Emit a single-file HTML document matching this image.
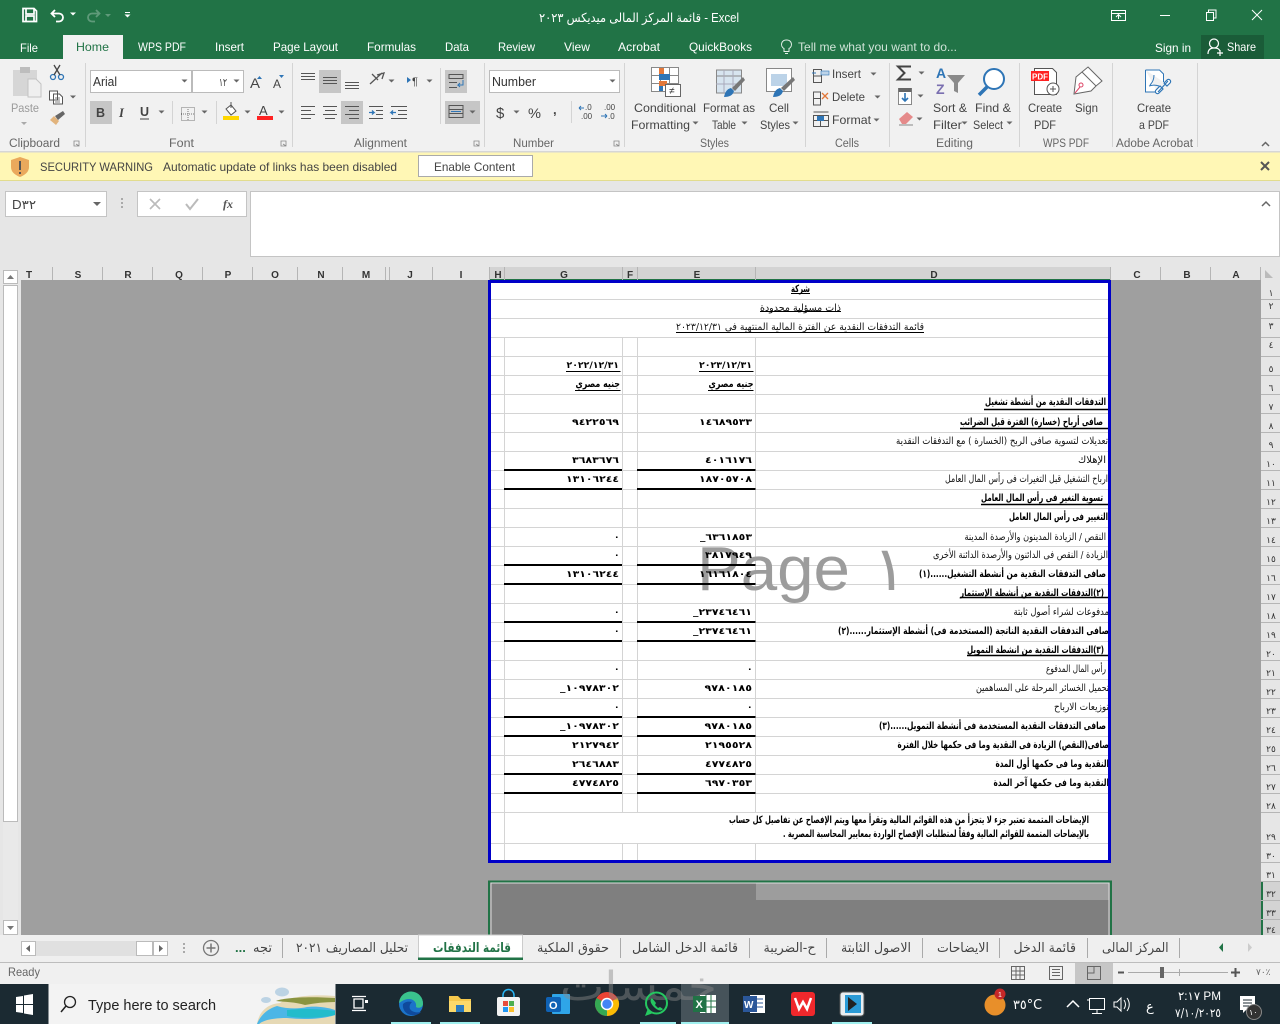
<!DOCTYPE html>
<html lang="en"><head><meta charset="utf-8"><title>Excel</title>
<style>
html,body{margin:0;padding:0;background:#e6e6e6;width:1280px;height:1024px;overflow:hidden}
svg{display:block;position:absolute;left:0;top:0}
text{font-family:"Liberation Sans","DejaVu Sans",sans-serif;white-space:pre}
.u{font-size:12px;fill:#444}
.w{font-size:12px;fill:#fff}
.g{font-size:11.500px;fill:#666}
.h{font-size:10px;fill:#333;text-anchor:middle;font-weight:bold}
.c{font-family:"DejaVu Sans",sans-serif;font-size:10px;fill:#111;direction:rtl;text-anchor:start}
.b{font-weight:bold;fill:#000}
.n{font-family:"DejaVu Sans",sans-serif;font-size:9px;font-weight:bold;fill:#000;direction:ltr}
.rn{font-family:"DejaVu Sans",sans-serif;font-size:9px;fill:#333;text-anchor:middle}
.tab{font-family:"DejaVu Sans",sans-serif;font-size:13px;fill:#444;direction:rtl;text-anchor:start}
.ln{stroke:#555;stroke-width:1;fill:none}
</style></head><body>
<svg width="1280" height="1024" viewBox="0 0 1280 1024">
<defs><path id="a" d="M-3-1.500h6l-3 3z" fill="#666"/><path id="aw" d="M-3-1.500h6l-3 3z" fill="#fff"/></defs>

<!-- window chrome -->
<rect width="1280" height="59" fill="#217346"/>
<rect y="59" width="1280" height="93" fill="#f1f1f1"/>
<rect x="63" y="35" width="60" height="24" fill="#f1f1f1"/>
<rect x="1201" y="35" width="63" height="24" fill="#1a5c38"/>

<!-- quick access -->
<path d="M23 8.500h11l2.500 2.500v10.500h-13.500z M26 9v5h8V9 M26 21v-5h8v5" fill="none" stroke="#fff" stroke-width="1.700"/>
<path d="M55 10l-3.500 3.500 3.500 3.500 M52 13.500h7a4 4 0 0 1 0 8h-3" fill="none" stroke="#fff" stroke-width="1.800"/>
<use href="#aw" x="73" y="14"/>
<path d="M96 10l3.500 3.500-3.500 3.500 M99 13.500h-7a4 4 0 0 0 0 8h3" fill="none" stroke="#5f9a7a" stroke-width="1.800"/>
<path d="M105 14h6l-3 3z" fill="#5f9a7a"/>
<path d="M125 12.500h5" stroke="#fff"/><use href="#aw" x="127.500" y="16"/>
<text x="539" y="22" font-size="12.500" fill="#fff" textLength="200" lengthAdjust="spacingAndGlyphs">قائمة المركز المالى ميديكس ٢٠٢٣ - Excel</text>
<path d="M1111.500 10.500h14v10h-14z M1111.500 13.500h14 M1118.500 19v-4 M1116 17l2.500-2.500 2.500 2.500" fill="none" stroke="#fff"/>
<path d="M1160 15.500h10" stroke="#fff"/>
<path d="M1206.500 12.500h7v8h-7z M1208.500 12v-2h7.500v8h-2" fill="none" stroke="#fff"/>
<path d="M1252 10l10 10 M1262 10l-10 10" stroke="#fff"/>

<!-- tabs -->
<text class="w" x="20" y="52" textLength="18" lengthAdjust="spacingAndGlyphs">File</text>
<text x="76" y="51" font-size="12" fill="#217346" textLength="33" lengthAdjust="spacingAndGlyphs">Home</text>
<text class="w" x="138" y="51" textLength="48" lengthAdjust="spacingAndGlyphs">WPS PDF</text>
<text class="w" x="215" y="51" textLength="29" lengthAdjust="spacingAndGlyphs">Insert</text>
<text class="w" x="273" y="51" textLength="65" lengthAdjust="spacingAndGlyphs">Page Layout</text>
<text class="w" x="367" y="51" textLength="49" lengthAdjust="spacingAndGlyphs">Formulas</text>
<text class="w" x="445" y="51" textLength="24" lengthAdjust="spacingAndGlyphs">Data</text>
<text class="w" x="498" y="51" textLength="37" lengthAdjust="spacingAndGlyphs">Review</text>
<text class="w" x="564" y="51" textLength="26" lengthAdjust="spacingAndGlyphs">View</text>
<text class="w" x="618" y="51" textLength="42" lengthAdjust="spacingAndGlyphs">Acrobat</text>
<text class="w" x="689" y="51" textLength="63" lengthAdjust="spacingAndGlyphs">QuickBooks</text>
<path d="M786.500 40a4.500 4.500 0 0 1 2.500 8.500v3h-5v-3a4.500 4.500 0 0 1 2.500-8.500z M785 53.500h3" fill="none" stroke="#e4eee8"/>
<text x="798" y="51" font-size="12" fill="#cfe3d7" textLength="159" lengthAdjust="spacingAndGlyphs">Tell me what you want to do...</text>
<text class="w" x="1155" y="52" textLength="36" lengthAdjust="spacingAndGlyphs">Sign in</text>
<path d="M1208 54c0-4 2-6 6-6s5 1 6 3 M1214 39a4.500 4.500 0 1 1 0 9a4.500 4.500 0 0 1 0-9z M1217 53h6 M1220 50v6" fill="none" stroke="#fff" stroke-width="1.200"/>
<text class="w" x="1227" y="51" textLength="29" lengthAdjust="spacingAndGlyphs">Share</text>

<!-- ribbon group separators -->
<path d="M85.500 63v84 M292.500 63v84 M484.500 63v84 M624.500 63v84 M805.500 63v84 M889.500 63v84 M1019.500 63v84 M1112.500 63v84 M1197.500 63v84" stroke="#d4d4d4"/>
<path d="M172.500 101v23 M216.500 101v23 M440.500 68v56 M571.500 101v22" stroke="#d4d4d4"/>
<rect y="151" width="1280" height="1.500" fill="#d6d6d6"/>
<text class="g" x="9" y="147" textLength="51" lengthAdjust="spacingAndGlyphs">Clipboard</text>
<text class="g" x="169" y="147" textLength="25" lengthAdjust="spacingAndGlyphs">Font</text>
<text class="g" x="354" y="147" textLength="53" lengthAdjust="spacingAndGlyphs">Alignment</text>
<text class="g" x="513" y="147" textLength="41" lengthAdjust="spacingAndGlyphs">Number</text>
<text class="g" x="700" y="147" textLength="29" lengthAdjust="spacingAndGlyphs">Styles</text>
<text class="g" x="835" y="147" textLength="24" lengthAdjust="spacingAndGlyphs">Cells</text>
<text class="g" x="936" y="147" textLength="37" lengthAdjust="spacingAndGlyphs">Editing</text>
<text class="g" x="1043" y="147" textLength="46" lengthAdjust="spacingAndGlyphs">WPS PDF</text>
<text class="g" x="1116" y="147" textLength="77" lengthAdjust="spacingAndGlyphs">Adobe Acrobat</text>
<path d="M74 141h5v5h-5z M76 144l3 2 M281 141h5v5h-5z M283 144l3 2 M474 141h5v5h-5z M476 144l3 2 M614 141h5v5h-5z M616 144l3 2" fill="none" stroke="#888" stroke-width=".8"/>
<path d="M1262 146l3.500-3.500 3.500 3.500" fill="none" stroke="#666" stroke-width="1.500"/>

<!-- clipboard -->
<rect x="13" y="70" width="24" height="26" fill="#d6d6d6"/><rect x="20" y="67" width="10" height="6" fill="#bdbdbd"/>
<path d="M28 79h8l5 5v13H28z" fill="#efefef" stroke="#c3c3c3"/>
<text x="11" y="112" font-size="12" fill="#9a9a9a" textLength="28" lengthAdjust="spacingAndGlyphs">Paste</text>
<path d="M21 122h6l-3 3z" fill="#aaa"/>
<circle cx="53" cy="77" r="2.500" fill="none" stroke="#2e75b6" stroke-width="1.300"/><circle cx="61" cy="77" r="2.500" fill="none" stroke="#2e75b6" stroke-width="1.300"/>
<path d="M54 75l6-10 M60 75l-6-10" stroke="#444" stroke-width="1.300"/>
<path d="M49.500 91h8v9h-8z M53.500 94h6l3 3v7h-9z" fill="#fff" stroke="#555"/><path d="M55 98h5 M55 100h5 M55 102h5" stroke="#555" stroke-width=".7"/>
<use href="#a" x="73" y="97"/>
<path d="M50 120l6 5 3-4-5-5z" fill="#e2b47d"/><path d="M55 116l8-5 2 3-7 6z" fill="#666"/>

<!-- font -->
<rect x="90.500" y="70.500" width="101" height="22" fill="#fff" stroke="#bbb"/><rect x="192.500" y="70.500" width="51" height="22" fill="#fff" stroke="#bbb"/>
<text x="93" y="86" font-size="12.500" fill="#333" textLength="24" lengthAdjust="spacingAndGlyphs">Arial</text>
<text x="219" y="86" font-size="11" fill="#333" style="font-family:'DejaVu Sans',sans-serif" textLength="8" lengthAdjust="spacingAndGlyphs">١٢</text>
<use href="#a" x="184.500" y="81"/><use href="#a" x="236.500" y="81"/>
<text x="250" y="88" font-size="14" fill="#444" textLength="10" lengthAdjust="spacingAndGlyphs">A</text><path d="M257 79l2.500-3 2.500 3z" fill="#2e75b6"/>
<text x="273" y="88" font-size="12" fill="#444" textLength="8" lengthAdjust="spacingAndGlyphs">A</text><path d="M279 75h5l-2.500 3z" fill="#2e75b6"/>
<rect x="90" y="101" width="22" height="23" fill="#c6c6c6"/>
<text x="96" y="117" font-size="12.500" font-weight="bold" fill="#444">B</text>
<text x="119" y="117" font-size="12.500" font-style="italic" fill="#444" style="font-family:'Liberation Serif',serif;font-weight:bold">I</text>
<text x="140" y="116" font-size="12.500" font-weight="bold" fill="#444">U</text><path d="M140 119h9" stroke="#444"/>
<use href="#a" x="161.500" y="112"/>
<path d="M181.500 107.500h13v13h-13z M188 107v14 M181 114h14" fill="none" stroke="#777" stroke-dasharray="1 1"/>
<use href="#a" x="204.500" y="112"/>
<path d="M226 109l5-4 5 6-5 4z" fill="#fff" stroke="#555"/><path d="M231 102v6" stroke="#555"/>
<rect x="223" y="116" width="16" height="4" fill="#ffd700"/><use href="#a" x="247.500" y="112"/>
<text x="259" y="115" font-size="13" fill="#444">A</text><rect x="257" y="116" width="16" height="4" fill="#f22"/><use href="#a" x="281.500" y="112"/>

<!-- alignment -->
<rect x="319" y="70" width="22" height="23" fill="#c6c6c6"/><rect x="341" y="101" width="22" height="23" fill="#c6c6c6"/>
<rect x="445" y="70" width="22" height="23" fill="#c6c6c6"/><rect x="445" y="101" width="35" height="23" fill="#c6c6c6"/>
<path class="ln" d="M301 73.500h14 M301 76.500h14 M301 79.500h14 M323 77.500h14 M323 80.500h14 M323 83.500h14 M345 82.500h14 M345 85.500h14 M345 88.500h14"/>
<path class="ln" d="M301 106.500h14 M301 110.500h10 M301 114.500h14 M301 118.500h10 M323 106.500h14 M325 110.500h10 M323 114.500h14 M325 118.500h10 M345 106.500h14 M349 110.500h10 M345 114.500h14 M349 118.500h10"/>
<path d="M370 84l12-11 M377 75l7-2-2 6 M372 74l6 6" fill="none" stroke="#555" stroke-width="1.300"/><use href="#a" x="391.500" y="81"/>
<path d="M407 77l4 3-4 3z" fill="#2e75b6"/><text x="412" y="85" font-size="11" fill="#444">¶</text><use href="#a" x="429.500" y="81"/>
<path class="ln" d="M369 106.500h14 M376 110.500h7 M376 114.500h7 M369 118.500h14 M391 106.500h16 M398 110.500h9 M398 114.500h9 M391 118.500h16"/>
<path d="M369 112.500h5l-2-2m2 2l-2 2 M396 112.500h-5l2-2m-2 2l2 2" fill="none" stroke="#2e75b6" stroke-width="1.300"/>
<path class="ln" d="M449 74.500h14v4h-14z M449 82.500h8 M449 87.500h8"/><path d="M463 80v5h-5l2-2m-2 2l2 2" fill="none" stroke="#2e75b6"/>
<path class="ln" d="M449 105.500h14v12h-14z M449 109.500h14 M449 113.500h14"/><path d="M451 111.500h10" stroke="#2e75b6"/><use href="#a" x="472.500" y="112"/>

<!-- number -->
<rect x="489.500" y="70.500" width="130" height="22" fill="#fff" stroke="#bbb"/>
<text x="492" y="86" font-size="12.500" fill="#333" textLength="44" lengthAdjust="spacingAndGlyphs">Number</text><use href="#a" x="612.500" y="81"/>
<text x="496" y="118" font-size="15" fill="#444">$</text><use href="#a" x="516.500" y="112"/>
<text x="528" y="118" font-size="14" fill="#444" textLength="13" lengthAdjust="spacingAndGlyphs">%</text>
<text x="553" y="114" font-size="13" font-weight="bold" fill="#444">,</text>
<text x="585" y="110" font-size="8" fill="#444">.0</text><text x="581" y="119" font-size="8" fill="#444">.00</text><path d="M579 108h5m-5 0l2-2m-2 2l2 2" stroke="#2e75b6" fill="none"/>
<text x="604" y="110" font-size="8" fill="#444">.00</text><text x="608" y="119" font-size="8" fill="#444">.0</text><path d="M601 116h6m0 0l-2-2m2 2l-2 2" stroke="#2e75b6" fill="none"/>

<!-- styles -->
<path d="M651.500 67.500h27v24h-27z M660.500 67.500v24 M669.500 67.500v24 M651.500 75.500h27 M651.500 83.500h27" fill="#fff" stroke="#888"/>
<rect x="659" y="68" width="5" height="6" fill="#e2783a"/><rect x="659" y="74" width="11" height="6" fill="#2e75b6"/><rect x="659" y="81" width="8" height="5" fill="#e2783a"/><rect x="659" y="86" width="4" height="5" fill="#2e75b6"/>
<rect x="665.500" y="84.500" width="15" height="12" fill="#fff" stroke="#666"/><text x="669" y="94" font-size="10" fill="#333">≠</text>
<text class="u" x="634" y="112" textLength="62" lengthAdjust="spacingAndGlyphs">Conditional</text>
<text class="u" x="631" y="129" textLength="59" lengthAdjust="spacingAndGlyphs">Formatting</text><use href="#a" x="695.500" y="123"/>
<path d="M716.500 70h25v23h-25z M716.500 76h25" fill="#d7e4ef" stroke="#888"/><path d="M724 70v23 M733 70v23 M716 84h25" stroke="#aab"/>
<path d="M724 97c1-5 3-8 7-9l3 3c-1 4-4 6-10 6z" fill="#2e75b6"/><path d="M732 88l11-11 2 3-10 11z" fill="#777"/>
<text class="u" x="703" y="112" textLength="52" lengthAdjust="spacingAndGlyphs">Format as</text>
<text class="u" x="712" y="129" textLength="24" lengthAdjust="spacingAndGlyphs">Table</text><use href="#a" x="744.500" y="123"/>
<path d="M766.500 68.500h25v23h-25z" fill="#fff" stroke="#888"/><rect x="771" y="74" width="16" height="12" fill="#bcd3e8"/>
<path d="M773 97c1-5 3-8 7-9l3 3c-1 4-4 6-10 6z" fill="#2e75b6"/><path d="M781 88l12-11 2 3-11 11z" fill="#777"/>
<text class="u" x="769" y="112" textLength="20" lengthAdjust="spacingAndGlyphs">Cell</text>
<text class="u" x="760" y="129" textLength="30" lengthAdjust="spacingAndGlyphs">Styles</text><use href="#a" x="795.500" y="123"/>

<!-- cells -->
<path class="ln" d="M813.500 69.500h8v13h-8z M813.500 76h8"/><rect x="821" y="71" width="8" height="4" fill="#bcd3e8" stroke="#2e75b6" stroke-width=".6"/>
<path d="M816 73h-4" stroke="#2e75b6"/>
<text class="u" x="832" y="78" textLength="29" lengthAdjust="spacingAndGlyphs">Insert</text><use href="#a" x="873.500" y="74"/>
<path class="ln" d="M813.500 92h7v13h-7z M813.500 98.500h7"/><path d="M822 93l6 6 M828 93l-6 6" stroke="#e2783a" stroke-width="1.300"/>
<text class="u" x="832" y="101" textLength="33" lengthAdjust="spacingAndGlyphs">Delete</text><use href="#a" x="877.500" y="97"/>
<path class="ln" d="M813.500 115.500h15v11h-15z M813.500 120.500h15 M820.500 115v12 M813.500 112h15"/><rect x="817" y="116" width="7" height="5" fill="#2e75b6"/>
<text class="u" x="832" y="124" textLength="39" lengthAdjust="spacingAndGlyphs">Format</text><use href="#a" x="876.500" y="120"/>

<!-- editing -->
<path d="M911 66.500h-13l6.500 6.500-6.500 6.500h13" fill="none" stroke="#444" stroke-width="2"/><use href="#a" x="921.500" y="73"/>
<rect x="898.500" y="88.500" width="13" height="16" fill="#fff" stroke="#888"/><rect x="898.500" y="88" width="13" height="4" fill="#666"/><path d="M905 93v8m-3-3l3 3 3-3" stroke="#2e75b6" fill="none" stroke-width="1.600"/><use href="#a" x="920.500" y="96"/>
<path d="M899 119l8-7 6 5-7 7h-4z" fill="#e58a8a"/><path d="M899 125h14" stroke="#888"/><use href="#a" x="919.500" y="119"/>
<text x="936" y="78" font-size="14" font-weight="bold" fill="#2e75b6">A</text><text x="936" y="94" font-size="14" font-weight="bold" fill="#7a6fb0">Z</text>
<path d="M947 75h18l-7 8v10l-4-2v-8z" fill="#8a8a8a"/>
<text class="u" x="933" y="112" textLength="34" lengthAdjust="spacingAndGlyphs">Sort &amp;</text>
<text class="u" x="933" y="129" textLength="29" lengthAdjust="spacingAndGlyphs">Filter</text><use href="#a" x="964.500" y="123"/>
<circle cx="994" cy="79" r="10" fill="#fff" stroke="#2e75b6" stroke-width="2"/><path d="M987 87l-8 8" stroke="#2e75b6" stroke-width="3.500"/>
<text class="u" x="975" y="112" textLength="36" lengthAdjust="spacingAndGlyphs">Find &amp;</text>
<text class="u" x="973" y="129" textLength="30" lengthAdjust="spacingAndGlyphs">Select</text><use href="#a" x="1009.500" y="123"/>

<!-- wps + adobe -->
<path d="M1034.500 68.500h18l4 4v22h-22z" fill="#fff" stroke="#555"/><rect x="1031" y="71" width="18" height="10" fill="#f22"/>
<text x="1032" y="79.500" font-size="8" font-weight="bold" fill="#fff">PDF</text>
<circle cx="1053" cy="89" r="6" fill="#fff" stroke="#555"/><path d="M1050 89h6 M1053 86v6" stroke="#555"/>
<text class="u" x="1028" y="112" textLength="34" lengthAdjust="spacingAndGlyphs">Create</text>
<text class="u" x="1034" y="129" textLength="22" lengthAdjust="spacingAndGlyphs">PDF</text>
<path d="M1088 67l14 14-6 5-14-14z M1082 72l-6 5-2 17 17-3 5-5" fill="#fff" stroke="#666"/><circle cx="1081" cy="85" r="2" fill="none" stroke="#d46"/><path d="M1075 93l5-6" stroke="#d46"/>
<text class="u" x="1075" y="112" textLength="23" lengthAdjust="spacingAndGlyphs">Sign</text>
<path d="M1145.500 70h14l4 4v8 M1145.500 70v22h12" fill="#fff" stroke="#2e75b6"/><path d="M1150 85c3-3 4-7 4-10 M1149 86c3-1 7-1 10 0" stroke="#2e75b6" fill="none"/>
<path d="M1158 92l10-11 M1156 90l4-4 3 3-4 4a2 2 0 0 1-3-3z M1164 83l3-3a2 2 0 0 1 3 3l-3 3z" stroke="#2e75b6" fill="#fff" stroke-width="1.200"/>
<text class="u" x="1137" y="112" textLength="34" lengthAdjust="spacingAndGlyphs">Create</text>
<text class="u" x="1139" y="129" textLength="30" lengthAdjust="spacingAndGlyphs">a PDF</text>

<!-- security bar -->
<rect y="152.500" width="1280" height="28" fill="#fff7b5"/>
<path d="M0 180.500h1280" stroke="#e2dc8e"/>
<path d="M20 157l9 3v7c0 5-4 8-9 10-5-2-9-5-9-10v-7z" fill="#eaa95c"/>
<path d="M20 161v9 M20 172v2" stroke="#555" stroke-width="2"/>
<text x="40" y="171" font-size="12" fill="#444" textLength="113" lengthAdjust="spacingAndGlyphs">SECURITY WARNING</text>
<text x="163" y="171" font-size="12" fill="#444" textLength="234" lengthAdjust="spacingAndGlyphs">Automatic update of links has been disabled</text>
<rect x="418.500" y="155.500" width="114" height="21" fill="#fff" stroke="#aaa"/>
<text x="434" y="171" font-size="12" fill="#444" textLength="81" lengthAdjust="spacingAndGlyphs">Enable Content</text>
<path d="M1261 162l8 8 M1269 162l-8 8" stroke="#555" stroke-width="2"/>

<!-- formula bar -->
<rect y="181" width="1280" height="99" fill="#e6e6e6"/>
<rect x="5.500" y="191.500" width="101" height="25" fill="#fff" stroke="#c4c4c4"/>
<text x="12" y="209" font-size="12.500" fill="#444" textLength="24" lengthAdjust="spacingAndGlyphs">D٣٢</text>
<path d="M93 202h8l-4 4z" fill="#666"/>
<path d="M122 198v2 M122 202v2 M122 206v2" stroke="#aaa" stroke-width="2"/>
<rect x="137.500" y="191.500" width="109" height="25" fill="#fff" stroke="#c4c4c4"/>
<path d="M150 199l10 10 M160 199l-10 10" stroke="#bbb" stroke-width="1.700"/>
<path d="M186 204l4 5 8-10" fill="none" stroke="#bbb" stroke-width="2"/>
<text x="223" y="208" font-size="12" font-style="italic" fill="#555" style="font-family:'Liberation Serif',serif;font-weight:bold">fx</text>
<rect x="250.500" y="191.500" width="1029" height="65" fill="#fff" stroke="#c4c4c4"/>
<path d="M1262 206l4-4 4 4" fill="none" stroke="#666" stroke-width="1.500"/>

<!-- sheet area -->
<rect x="21" y="280" width="1240" height="655" fill="#9f9f9f"/>

<!-- column headers -->
<rect x="489" y="267" width="622" height="13" fill="#d3d3d3"/>
<rect x="489" y="279" width="622" height="1.500" fill="#217346"/>
<path d="M52.500 267v13 M102.500 267v13 M152.500 267v13 M202.500 267v13 M252.500 267v13 M297.500 267v13 M342.500 267v13 M385.500 267v13 M389.500 267v13 M432.500 267v13 M489.500 267v13 M504.500 267v13 M622.500 267v13 M637.500 267v13 M755.500 267v13 M1110.500 267v13 M1160.500 267v13 M1210.500 267v13 M1260.500 267v13" stroke="#b5b5b5"/>
<text class="h" x="29" y="278">T</text><text class="h" x="78" y="278">S</text><text class="h" x="128" y="278">R</text><text class="h" x="179" y="278">Q</text><text class="h" x="228" y="278">P</text><text class="h" x="275" y="278">O</text><text class="h" x="321" y="278">N</text><text class="h" x="366" y="278">M</text><text class="h" x="410" y="278">J</text><text class="h" x="461" y="278">I</text>
<text class="h" x="498" y="278">H</text><text class="h" x="564" y="278">G</text><text class="h" x="630" y="278">F</text><text class="h" x="697" y="278">E</text><text class="h" x="934" y="278">D</text><text class="h" x="1137" y="278">C</text><text class="h" x="1187" y="278">B</text><text class="h" x="1236" y="278">A</text>
<path d="M1265 278v-8l8 8z" fill="#bbb"/>

<!-- row headers -->
<rect x="1261" y="280" width="19" height="655" fill="#e6e6e6"/>
<rect x="1261" y="881" width="19" height="54" fill="#d3d3d3"/>
<rect x="1261" y="881" width="2" height="54" fill="#217346"/>
<path stroke="#b5b5b5" d="M1261 299.500h19M1261 318.500h19M1261 337.500h19M1261 356.500h19M1261 375.500h19M1261 394.500h19M1261 413.500h19M1261 432.500h19M1261 451.500h19M1261 470.500h19M1261 489.500h19M1261 508.500h19M1261 527.500h19M1261 546.500h19M1261 565.500h19M1261 584.500h19M1261 603.500h19M1261 622.500h19M1261 641.500h19M1261 660.500h19M1261 679.500h19M1261 698.500h19M1261 717.500h19M1261 736.500h19M1261 755.500h19M1261 774.500h19M1261 793.500h19M1261 812.500h19M1261 843.500h19M1261 862.500h19M1261 881.500h19M1261 900.500h19M1261 919.500h19"/>
<text class="rn" x="1271" y="296">١</text><text class="rn" x="1271" y="309">٢</text><text class="rn" x="1271" y="329">٣</text><text class="rn" x="1271" y="348">٤</text><text class="rn" x="1271" y="372">٥</text><text class="rn" x="1271" y="391">٦</text><text class="rn" x="1271" y="410">٧</text><text class="rn" x="1271" y="429">٨</text><text class="rn" x="1271" y="448">٩</text><text class="rn" x="1271" y="467">١٠</text><text class="rn" x="1271" y="486">١١</text><text class="rn" x="1271" y="505">١٢</text><text class="rn" x="1271" y="524">١٣</text><text class="rn" x="1271" y="543">١٤</text><text class="rn" x="1271" y="562">١٥</text><text class="rn" x="1271" y="581">١٦</text><text class="rn" x="1271" y="600">١٧</text><text class="rn" x="1271" y="619">١٨</text><text class="rn" x="1271" y="638">١٩</text><text class="rn" x="1271" y="657">٢٠</text><text class="rn" x="1271" y="676">٢١</text><text class="rn" x="1271" y="695">٢٢</text><text class="rn" x="1271" y="714">٢٣</text><text class="rn" x="1271" y="733">٢٤</text><text class="rn" x="1271" y="752">٢٥</text><text class="rn" x="1271" y="771">٢٦</text><text class="rn" x="1271" y="790">٢٧</text><text class="rn" x="1271" y="809">٢٨</text><text class="rn" x="1271" y="840">٢٩</text><text class="rn" x="1271" y="859">٣٠</text><text class="rn" x="1271" y="878">٣١</text><text class="rn" x="1271" y="897">٣٢</text><text class="rn" x="1271" y="916">٣٣</text><text class="rn" x="1271" y="933">٣٤</text>

<!-- vertical scrollbar -->
<rect x="3" y="270" width="15" height="665" fill="#e9e9e9"/>
<rect x="3.500" y="270.500" width="14" height="13" fill="#fff" stroke="#bbb"/><path d="M7 279l3.500-4 3.500 4z" fill="#777"/>
<rect x="3.500" y="285.500" width="14" height="536" fill="#fff" stroke="#bbb"/>
<rect x="3.500" y="920.500" width="14" height="14" fill="#fff" stroke="#bbb"/><path d="M7 926h7l-3.500 4z" fill="#777"/>

<!-- page 1 -->
<rect x="490" y="282" width="620" height="580" fill="#fff"/>
<path fill="none" stroke="#d4d4d4" d="M491 299.500H1108M491 318.500H1108M491 337.500H1108M491 356.500H1108M491 375.500H1108M491 394.500H1108M491 413.500H1108M491 432.500H1108M491 451.500H1108M491 470.500H1108M491 489.500H1108M491 508.500H1108M491 527.500H1108M491 546.500H1108M491 565.500H1108M491 584.500H1108M491 603.500H1108M491 622.500H1108M491 641.500H1108M491 660.500H1108M491 679.500H1108M491 698.500H1108M491 717.500H1108M491 736.500H1108M491 755.500H1108M491 774.500H1108M491 793.500H1108M491 812.500H1108M491 843.500H1108 M504.500 337V861 M622.500 337V812 M637.500 337V812 M755.500 337V812 M622.500 843V861 M637.500 843V861 M755.500 843V861"/>

<!-- watermark -->
<text x="697" y="590" font-size="62" fill="#9c9c9c" textLength="153" lengthAdjust="spacingAndGlyphs">Page</text>
<text x="873" y="590" font-size="62" fill="#9c9c9c" style="font-family:'DejaVu Sans',sans-serif">١</text>

<!-- thick rules -->
<path stroke="#000" stroke-width="2" d="M504 470H622M637 470H755.500M504 489H622M637 489H755.500M504 565H622M637 565H755.500M504 584H622M637 584H755.500M504 622H622M637 622H755.500M504 641H622M637 641H755.500M504 717H622M637 717H755.500M504 736H622M637 736H755.500M504 774H622M637 774H755.500M504 793H622M637 793H755.500"/>
<path stroke="#000" stroke-width="1" d="M791 293.500H810M760 311.500H841M676 332.500H924M566 371.500H620.500M699 371.500H753.500M575 390.500H620.500M708 390.500H753.500"/>
<path stroke="#000" stroke-width="1.500" d="M984 409.500H1109M960 428.500H1109M981 504.500H1109M960 597.500H1109M967 655.500H1109"/>

<!-- table text -->
<text class="c b" x="810" y="292" textLength="19" lengthAdjust="spacingAndGlyphs">شركة</text>
<text class="c" x="841" y="311" textLength="81" lengthAdjust="spacingAndGlyphs">ذات مسؤلية محدودة</text>
<text class="c" x="924" y="330" textLength="248" lengthAdjust="spacingAndGlyphs">قائمة التدفقات النقدية عن الفترة المالية المنتهية فى ٢٠٢٣/١٢/٣١</text>
<text class="n" x="566.500" y="368" textLength="52.500" lengthAdjust="spacingAndGlyphs">٢٠٢٢/١٢/٣١</text>
<text class="n" x="699" y="368" textLength="53" lengthAdjust="spacingAndGlyphs">٢٠٢٣/١٢/٣١</text>
<text class="c b" x="620" y="387" textLength="44.500" lengthAdjust="spacingAndGlyphs">جنيه مصري</text>
<text class="c b" x="753.500" y="387" textLength="45" lengthAdjust="spacingAndGlyphs">جنيه مصري</text>
<text class="c b" x="1106" y="405" textLength="121" lengthAdjust="spacingAndGlyphs">التدفقات النقدية من أنشطة تشغيل</text>
<text class="c b" x="1103" y="425" textLength="143" lengthAdjust="spacingAndGlyphs">صافى أرباح (خسارة) الفترة قبل الضرائب</text>
<text class="n" x="699" y="425" textLength="53" lengthAdjust="spacingAndGlyphs">١٤٦٨٩٥٣٣</text><text class="n" x="572" y="425" textLength="47" lengthAdjust="spacingAndGlyphs">٩٤٢٢٥٦٩</text>
<text class="c" x="1108" y="444" textLength="212" lengthAdjust="spacingAndGlyphs">تعديلات لتسوية صافى الربح (الخسارة ) مع التدفقات النقدية</text>
<text class="c" x="1106" y="463" textLength="28" lengthAdjust="spacingAndGlyphs">الإهلاك</text>
<text class="n" x="705" y="463" textLength="47" lengthAdjust="spacingAndGlyphs">٤٠١٦١٧٦</text><text class="n" x="572" y="463" textLength="47" lengthAdjust="spacingAndGlyphs">٣٦٨٣٦٧٦</text>
<text class="c" x="1108" y="482" textLength="163" lengthAdjust="spacingAndGlyphs">ارباح التشغيل قبل التغيرات فى رأس المال العامل</text>
<text class="n" x="699" y="482" textLength="53" lengthAdjust="spacingAndGlyphs">١٨٧٠٥٧٠٨</text><text class="n" x="566" y="482" textLength="53" lengthAdjust="spacingAndGlyphs">١٣١٠٦٢٤٤</text>
<text class="c b" x="1103" y="501" textLength="122" lengthAdjust="spacingAndGlyphs">تسوية التغير فى رأس المال العامل</text>
<text class="c b" x="1108" y="520" textLength="99" lengthAdjust="spacingAndGlyphs">التغيير فى رأس المال العامل</text>
<text class="c" x="1106" y="540" textLength="141.500" lengthAdjust="spacingAndGlyphs">النقص / الزيادة المدينون والأرصدة المدينة</text>
<text class="n" x="700" y="540" textLength="52" lengthAdjust="spacingAndGlyphs">_٦٣٦١٨٥٣</text><text class="n" x="614" y="540">٠</text>
<text class="c" x="1108" y="558" textLength="175" lengthAdjust="spacingAndGlyphs">الزيادة / النقص فى الدائنون والأرصدة الدائنة الأخرى</text>
<text class="n" x="705" y="558" textLength="47" lengthAdjust="spacingAndGlyphs">٣٨١٧٩٤٩</text><text class="n" x="614" y="558">٠</text>
<text class="c b" x="1106" y="577" textLength="187" lengthAdjust="spacingAndGlyphs">صافى التدفقات النقدية من أنشطة التشغيل......(١)</text>
<text class="n" x="699" y="577" textLength="53" lengthAdjust="spacingAndGlyphs">١٦١٦١٨٠٤</text><text class="n" x="566" y="577" textLength="53" lengthAdjust="spacingAndGlyphs">١٣١٠٦٢٤٤</text>
<text class="c b" x="1104" y="596" textLength="144" lengthAdjust="spacingAndGlyphs">(٢)التدفقات النقدية من أنشطة الإستثمار</text>
<text class="c" x="1109" y="615" textLength="95.500" lengthAdjust="spacingAndGlyphs">مدفوعات لشراء أصول ثابتة</text>
<text class="n" x="693" y="615" textLength="59" lengthAdjust="spacingAndGlyphs">_٢٣٧٤٦٤٦١</text><text class="n" x="614" y="615">٠</text>
<text class="c b" x="1109" y="634" textLength="271" lengthAdjust="spacingAndGlyphs">صافى التدفقات النقدية الناتجة (المستخدمة فى) أنشطة الإستثمار......(٢)</text>
<text class="n" x="693" y="634" textLength="59" lengthAdjust="spacingAndGlyphs">_٢٣٧٤٦٤٦١</text><text class="n" x="614" y="634">٠</text>
<text class="c b" x="1104" y="653" textLength="137" lengthAdjust="spacingAndGlyphs">(٣)التدفقات النقدية من انشطة التمويل</text>
<text class="c" x="1106" y="672" textLength="60" lengthAdjust="spacingAndGlyphs">رأس المال المدفوع</text>
<text class="n" x="747" y="672">٠</text><text class="n" x="614" y="672">٠</text>
<text class="c" x="1109" y="691" textLength="133" lengthAdjust="spacingAndGlyphs">تحميل الخسائر المرحلة على المساهمين</text>
<text class="n" x="704.500" y="691" textLength="47.500" lengthAdjust="spacingAndGlyphs">٩٧٨٠١٨٥</text><text class="n" x="560" y="691" textLength="59" lengthAdjust="spacingAndGlyphs">_١٠٩٧٨٣٠٢</text>
<text class="c" x="1109" y="710" textLength="55" lengthAdjust="spacingAndGlyphs">توزيعات الارباح</text>
<text class="n" x="747" y="710">٠</text><text class="n" x="614" y="710">٠</text>
<text class="c b" x="1106" y="729" textLength="227" lengthAdjust="spacingAndGlyphs">صافى التدفقات النقدية المستخدمة فى أنشطة التمويل......(٣)</text>
<text class="n" x="704.500" y="729" textLength="47.500" lengthAdjust="spacingAndGlyphs">٩٧٨٠١٨٥</text><text class="n" x="560" y="729" textLength="59" lengthAdjust="spacingAndGlyphs">_١٠٩٧٨٣٠٢</text>
<text class="c b" x="1109" y="748" textLength="211.500" lengthAdjust="spacingAndGlyphs">صافى(النقص) الزيادة فى النقدية وما فى حكمها خلال الفترة</text>
<text class="n" x="705" y="748" textLength="47" lengthAdjust="spacingAndGlyphs">٢١٩٥٥٢٨</text><text class="n" x="572" y="748" textLength="47" lengthAdjust="spacingAndGlyphs">٢١٢٧٩٤٢</text>
<text class="c b" x="1109" y="767" textLength="113.500" lengthAdjust="spacingAndGlyphs">النقدية وما فى حكمها أول المدة</text>
<text class="n" x="705" y="767" textLength="47" lengthAdjust="spacingAndGlyphs">٤٧٧٤٨٢٥</text><text class="n" x="572" y="767" textLength="47" lengthAdjust="spacingAndGlyphs">٢٦٤٦٨٨٣</text>
<text class="c b" x="1109" y="786" textLength="115.500" lengthAdjust="spacingAndGlyphs">النقدية وما فى حكمها آخر المدة</text>
<text class="n" x="705" y="786" textLength="47" lengthAdjust="spacingAndGlyphs">٦٩٧٠٣٥٣</text><text class="n" x="572" y="786" textLength="47" lengthAdjust="spacingAndGlyphs">٤٧٧٤٨٢٥</text>
<text class="c b" x="1089" y="823" textLength="360" lengthAdjust="spacingAndGlyphs">الإيضاحات المتممة تعتبر جزء لا يتجزأ من هذه القوائم المالية وتقرأ معها ويتم الإفصاح عن تفاصيل كل حساب</text>
<text class="c b" x="1089" y="837" textLength="306" lengthAdjust="spacingAndGlyphs">بالإيضاحات المتممة للقوائم المالية وفقاً لمتطلبات الإفصاح الواردة بمعايير المحاسبة المصرية .</text>

<!-- page borders -->
<rect x="489.500" y="281.500" width="620" height="580" fill="none" stroke="#0000c8" stroke-width="3"/>
<rect x="489" y="881.500" width="622" height="54" fill="#7f7f7f"/>
<rect x="756" y="883" width="353" height="17" fill="#9d9d9d"/>
<path d="M489 935V881.500H1111V935" fill="none" stroke="#217346" stroke-width="2"/>
<path d="M491 935V883H1109V935" fill="none" stroke="#ddd" stroke-width="1"/>

<!-- sheet tabs -->
<rect y="935" width="1280" height="27" fill="#efefef"/>
<path d="M0 962.500h1280" stroke="#bdbdbd"/>
<rect x="21.500" y="941.500" width="14" height="14" fill="#fff" stroke="#bbb"/><path d="M30 945v7l-4-3.500z" fill="#666"/>
<rect x="36" y="941" width="100" height="15" fill="#e0e0e0"/>
<rect x="136.500" y="941.500" width="16" height="14" fill="#fff" stroke="#bbb"/>
<rect x="153.500" y="941.500" width="14" height="14" fill="#fff" stroke="#bbb"/><path d="M159 945v7l4-3.500z" fill="#666"/>
<path d="M184 943v2 M184 947v2 M184 951v2" stroke="#aaa" stroke-width="2"/>
<circle cx="211" cy="948" r="7.500" fill="none" stroke="#777" stroke-width="1.300"/><path d="M206.500 948h9 M211 943.500v9" stroke="#777" stroke-width="1.500"/>
<text x="235" y="952" font-size="13" font-weight="bold" fill="#217346">...</text>
<text class="tab" x="272" y="952" textLength="19" lengthAdjust="spacingAndGlyphs">تجه</text>
<path stroke="#aaa" d="M282.500 938v20M620.500 938v20M749.500 938v20M826.500 938v20M922.500 938v20M999.500 938v20M1087.500 938v20M1179.500 938v20"/>
<text class="tab" x="408" y="952" textLength="112" lengthAdjust="spacingAndGlyphs">تحليل المصاريف ٢٠٢١</text>
<path d="M418.500 959V935H522.500V959" fill="#fff" stroke="#ccc"/><rect x="418" y="957.500" width="105" height="2.500" fill="#217346"/>
<text class="tab" x="511" y="952" textLength="78" lengthAdjust="spacingAndGlyphs" style="fill:#217346;font-weight:bold">قائمة التدفقات</text>
<text class="tab" x="609" y="952" textLength="72" lengthAdjust="spacingAndGlyphs">حقوق الملكية</text>
<text class="tab" x="738" y="952" textLength="106" lengthAdjust="spacingAndGlyphs">قائمة الدخل الشامل</text>
<text class="tab" x="815.500" y="952" textLength="52" lengthAdjust="spacingAndGlyphs">ح-الضريبة</text>
<text class="tab" x="911" y="952" textLength="70" lengthAdjust="spacingAndGlyphs">الاصول الثابتة</text>
<text class="tab" x="989" y="952" textLength="52" lengthAdjust="spacingAndGlyphs">الايضاحات</text>
<text class="tab" x="1076" y="952" textLength="62.500" lengthAdjust="spacingAndGlyphs">قائمة الدخل</text>
<text class="tab" x="1168.500" y="952" textLength="66.500" lengthAdjust="spacingAndGlyphs">المركز المالى</text>
<path d="M1223 943v9l-4-4.500z" fill="#217346"/><path d="M1248 943v9l4-4.500z" fill="#ccc"/>

<!-- status bar -->
<rect y="963" width="1280" height="21" fill="#f0f0f0"/>
<text x="8" y="976" font-size="12" fill="#666" textLength="32" lengthAdjust="spacingAndGlyphs">Ready</text>
<path d="M1011.500 966.500h13v13h-13z M1016 966.500v13 M1020 966.500v13 M1011.500 971h13 M1011.500 975h13" fill="none" stroke="#666"/>
<path d="M1049.500 966.500h13v13h-13z M1052 969.500h8 M1052 972.500h8 M1052 975.500h8" fill="none" stroke="#666"/>
<rect x="1075" y="963" width="38" height="21" fill="#c6c6c6"/>
<path d="M1087.500 966.500h13v13h-13z M1094 966.500v6.500h-6.500" fill="none" stroke="#666"/>
<path d="M1118 972.500h6" stroke="#555" stroke-width="2"/><path d="M1128 972.500h100 M1179.500 969v7" stroke="#aaa"/>
<rect x="1160" y="967" width="4" height="11" fill="#666"/>
<path d="M1231 972.500h9 M1235.500 968v9" stroke="#555" stroke-width="2"/>
<text x="1256" y="975" font-size="9" fill="#666" style="font-family:'DejaVu Sans',sans-serif">٧٠٪</text>

<!-- taskbar -->
<rect y="984" width="1280" height="40" fill="#1b2a32"/>
<path d="M16 997l7-1v8h-7z M24 995.500l9-1.500v10h-9z M16 1005h7v8l-7-1z M24 1005h9v10l-9-1.500z" fill="#fff"/>
<rect x="48.500" y="984" width="287" height="40" fill="#f3f3f3"/>
<circle cx="70" cy="1002" r="5.500" fill="none" stroke="#222" stroke-width="1.300"/><path d="M66 1006l-5 6" stroke="#222" stroke-width="1.500"/>
<text x="88" y="1010" font-size="15" fill="#222" textLength="128" lengthAdjust="spacingAndGlyphs">Type here to search</text>
<path d="M257 1024c2-12 10-20 23-21 8-6 30-9 55-7v28z" fill="#e6d9b5"/>
<path d="M276 1001c6-3 30-5 59-3v4c-10 0-20 1-30 3-10-3-20-3-29-4z" fill="#8a9440"/>
<path d="M257 1024c3-8 10-15 20-18 10 3 22 3 30 1 8-1 20 0 28 3v5c-12 4-30 5-48 3-10 0-22 1-28 6z" fill="#4cb6e6"/>
<path d="M287 1010c10-1 28-2 48 1v4c-14 3-34 4-48 1z" fill="#22bccb"/>
<ellipse cx="282" cy="992" rx="7" ry="4.500" fill="#bcd3e4"/><ellipse cx="266" cy="1000" rx="5" ry="3" fill="#bcd3e4"/>

<path d="M352 996.500h14 M352 1010.500h14 M354 999h9v9h-9z" fill="none" stroke="#fff" stroke-width="1.300"/><rect x="365" y="1000" width="3" height="3" fill="#fff"/>

<circle cx="411" cy="1004" r="12" fill="#1b74c9"/>
<path d="M399 1003a12 12 0 0 1 24 1c0 3-4 5-7 3 1-5-3-8-7-8-5 0-8 3-10 4z" fill="#3ac28d"/>
<path d="M403 1004c-1 6 4 12 11 11 3 0 5-1 7-3-5 1-9 0-11-3-1-3 0-5 2-7-4-1-7 0-9 2z" fill="#0f4a9c"/>
<path d="M449 996h9l3 3h10v13h-22z" fill="#f5c84c"/><rect x="449" y="1001" width="22" height="11" fill="#fbd96a"/><rect x="456" y="1005" width="8" height="7" fill="#2a7bc0"/>
<rect x="497" y="997" width="23" height="19" rx="2" fill="#f3f3f3"/><path d="M503 997v-2a5 5 0 0 1 11 0v2" fill="none" stroke="#29b6f6" stroke-width="1.500"/>
<rect x="503" y="1001" width="5" height="5" fill="#e74c3c"/><rect x="509" y="1001" width="5" height="5" fill="#4caf50"/><rect x="503" y="1007" width="5" height="5" fill="#2196f3"/><rect x="509" y="1007" width="5" height="5" fill="#fbc02d"/>
<rect x="552" y="994" width="18" height="20" rx="1" fill="#2fa5e8"/><rect x="546" y="997" width="15" height="15" rx="2" fill="#0f62b5"/>
<text x="549" y="1009" font-size="11" font-weight="bold" fill="#fff">O</text>
<circle cx="607" cy="1004" r="12" fill="#ea4335"/><path d="M607 1004l-10.400-6a12 12 0 0 0 10.400 18z" fill="#34a853"/><path d="M607 1004l10.400-6a12 12 0 0 1-10.400 18z" fill="#fbbc05"/><circle cx="607" cy="1004" r="5.500" fill="#4285f4" stroke="#fff" stroke-width="1.500"/>
<rect x="681" y="984" width="48" height="40" fill="#46535a"/>
<text x="560" y="1000" font-size="40" fill="#8a8a8a" opacity=".45" textLength="157" lengthAdjust="spacingAndGlyphs" style="font-family:'DejaVu Sans',sans-serif">خمسات</text>
<circle cx="656.500" cy="1003" r="10.500" fill="none" stroke="#25c860" stroke-width="2"/><path d="M645 1016l2.500-6.500 4.500 4z" fill="#25c860"/><path d="M652 998c-3 2-1 6 2 9s7 5 9 2l-3-2-2 1-3-3 1-2z" fill="#25c860"/>
<rect x="700" y="995" width="16" height="18" fill="#fff"/><path d="M706 995v18 M711 995v18 M700 1001h16 M700 1007h16" stroke="#217346"/>
<rect x="693" y="996" width="13" height="16" fill="#217346"/><text x="695.500" y="1008" font-size="11" font-weight="bold" fill="#fff">X</text>
<rect x="750" y="995" width="15" height="18" fill="#fff"/><path d="M753 999h10 M753 1003h10 M753 1007h10" stroke="#2b579a"/>
<rect x="743" y="996" width="14" height="16" fill="#2b579a"/><text x="744" y="1008" font-size="10" font-weight="bold" fill="#fff">W</text>
<rect x="791" y="992" width="24" height="24" rx="3" fill="#f0282c"/><path d="M795 998l4 11 4-7 4 7 4-11" fill="none" stroke="#fff" stroke-width="2.500"/>
<rect x="840" y="992" width="24" height="24" rx="3" fill="#e8eef2" stroke="#555"/><rect x="845" y="995" width="16" height="18" fill="#2a9ad6"/><path d="M848 997v14l9-7z" fill="#222"/>
<path fill="#9fefee" d="M391 1022h40v2h-40z M440 1022h40v2h-40z M640 1022h36v2h-36z M681 1022h48v2h-48z M832 1022h40v2h-40z"/>

<!-- tray -->
<circle cx="995" cy="1005" r="10.500" fill="#e88f2a"/><circle cx="1000" cy="994" r="5.500" fill="#c62828"/>
<text x="998" y="997" font-size="7" fill="#fff">1</text>
<text x="1013" y="1009" font-size="13" fill="#fff" style="font-family:'DejaVu Sans',sans-serif" textLength="29" lengthAdjust="spacingAndGlyphs">٣٥°C</text>
<path d="M1067 1007l6-6 6 6" fill="none" stroke="#fff" stroke-width="1.500"/>
<path d="M1089.500 998.500h15v11h-15z M1097 1010v3 M1092 1013.500h10 M1089 1000h-2" fill="none" stroke="#fff"/>
<path d="M1114 1002h3l4-4v13l-4-4h-3z M1124 1000c2 3 2 6 0 9 M1127 998c3 4 3 9 0 13" fill="none" stroke="#fff"/>
<text x="1146" y="1011" font-size="13" fill="#fff" style="font-family:'DejaVu Sans',sans-serif">ع</text>
<text x="1178" y="1000" font-size="12" fill="#fff" textLength="43" lengthAdjust="spacingAndGlyphs">٢:١٧ PM</text>
<text x="1175" y="1017" font-size="12" fill="#fff" style="font-family:'DejaVu Sans',sans-serif" textLength="46" lengthAdjust="spacingAndGlyphs">٧/١٠/٢٠٢٥</text>
<path d="M1240 996h15v14h-9l-3 3v-3h-3z" fill="#fff"/><path d="M1243 1000h9 M1243 1003h9 M1243 1006h6" stroke="#1b2a32"/>
<circle cx="1254" cy="1012" r="7.500" fill="#333" stroke="#888"/><text x="1249" y="1015" font-size="8" fill="#fff" style="font-family:'DejaVu Sans',sans-serif">١٠</text>
</svg>
</body></html>
